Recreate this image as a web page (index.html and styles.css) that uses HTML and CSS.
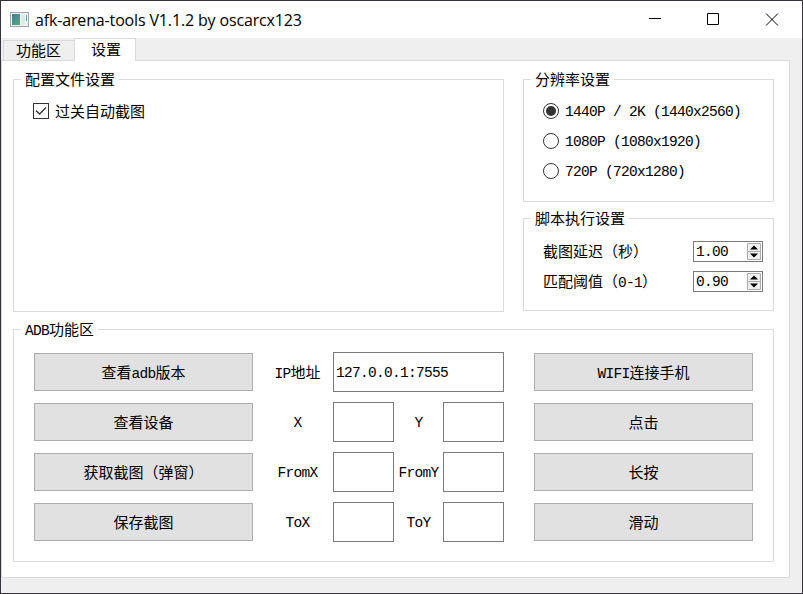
FILE: index.html
```html
<!DOCTYPE html>
<html lang="zh-CN">
<head>
<meta charset="utf-8">
<title>afk-arena-tools V1.1.2 by oscarcx123</title>
<link rel="stylesheet" href="styles.css">
</head>
<body>
<div class="window">
  <header class="titlebar">
    <svg class="app-icon" width="19" height="15" viewBox="0 0 19 15">
      <defs><linearGradient id="g" x1="0" y1="0" x2="1" y2="1"><stop offset="0" stop-color="#4c7a9c"/><stop offset="1" stop-color="#4fae72"/></linearGradient></defs>
      <rect x=".5" y=".5" width="18" height="14" fill="#f1f4f4" stroke="#a0a5aa"/>
      <rect x="2" y="2" width="8" height="11" fill="url(#g)"/>
      <rect x="11" y="2" width="4" height="11" fill="#e3e8ea"/>
      <rect x="16" y="3" width="1" height="6" fill="#67a397"/>
    </svg>
    <h1 class="title">afk-arena-tools V1.1.2 by oscarcx123</h1>
    <svg class="controls" width="130" height="14" viewBox="0 0 130 14" fill="none" stroke="#000">
      <path d="M0 5.500H12M58.500 .5H69.500V11.500H58.500Z"/>
      <path d="M117 .5L129 12.500M129 .5L117 12.500"/>
    </svg>
  </header>
  <nav class="tabs">
    <div class="tab">功能区</div>
    <div class="tab active">设置</div>
  </nav>
  <main class="pane">
    <fieldset class="group config">
      <legend>配置文件设置</legend>
      <label class="option">
        <svg width="16" height="16" viewBox="0 0 16 16" fill="none" stroke="#333"><rect x=".5" y=".5" width="15" height="15"/><path d="M3 7.500L6.500 11L13 4.500" stroke-width="1.300"/></svg>
        <span class="zh">过关自动截图</span>
      </label>
    </fieldset>
    <div class="side">
      <fieldset class="group resolution">
        <legend>分辨率设置</legend>
        <label class="option"><svg width="16" height="16" viewBox="0 0 16 16"><circle cx="8" cy="8" r="7.500" fill="#fff" stroke="#333"/><circle cx="8" cy="8" r="5" fill="#333"/></svg><span class="en">1440P / 2K (1440x2560)</span></label>
        <label class="option"><svg width="16" height="16" viewBox="0 0 16 16"><circle cx="8" cy="8" r="7.500" fill="#fff" stroke="#333"/></svg><span class="en">1080P (1080x1920)</span></label>
        <label class="option"><svg width="16" height="16" viewBox="0 0 16 16"><circle cx="8" cy="8" r="7.500" fill="#fff" stroke="#333"/></svg><span class="en">720P (720x1280)</span></label>
      </fieldset>
      <fieldset class="group script">
        <legend>脚本执行设置</legend>
        <div class="setting"><span class="zh">截图延迟（秒）</span>
          <div class="spin"><span class="en">1.00</span><svg width="14" height="17" viewBox="0 0 14 17"><path d="M.5 .5H13.500V16.500H.5ZM.5 8.500H13.500" fill="#f0f0f0" stroke="#acacac"/><path d="M3 6.500L7 2.500L11 6.500ZM3 10.500H11L7 14.500Z"/></svg></div>
        </div>
        <div class="setting"><span class="zh">匹配阈值（<span class="en">0-1</span>）</span>
          <div class="spin"><span class="en">0.90</span><svg width="14" height="17" viewBox="0 0 14 17"><path d="M.5 .5H13.500V16.500H.5ZM.5 8.500H13.500" fill="#f0f0f0" stroke="#acacac"/><path d="M3 6.500L7 2.500L11 6.500ZM3 10.500H11L7 14.500Z"/></svg></div>
        </div>
      </fieldset>
    </div>
    <fieldset class="group adb">
      <legend><span class="en">ADB</span>功能区</legend>
      <div class="adb-grid">
        <button>查看<span class="en">adb</span>版本</button>
        <span class="label wide zh"><span class="en">IP</span>地址</span>
        <div class="field long en">127.0.0.1:7555</div>
        <button class="last"><span class="en">WIFI</span>连接手机</button>

        <button>查看设备</button>
        <span class="label wide en">X</span><div class="field"></div>
        <span class="label en">Y</span><div class="field"></div>
        <button class="last">点击</button>

        <button>获取截图（弹窗）</button>
        <span class="label wide en">FromX</span><div class="field"></div>
        <span class="label en">FromY</span><div class="field"></div>
        <button class="last">长按</button>

        <button>保存截图</button>
        <span class="label wide en">ToX</span><div class="field"></div>
        <span class="label en">ToY</span><div class="field"></div>
        <button class="last">滑动</button>
      </div>
    </fieldset>
  </main>
</div>
</body>
</html>
```
FILE: styles.css
```css
* { box-sizing: border-box; }
body {
  margin: 0;
  color: #000;
  font: 400 15px/17px "Noto Sans CJK SC", sans-serif;
}
.window {
  width: 803px;
  height: 594px;
  border: 1px solid #35323c;
  background: #efefef;
  overflow: hidden;
}
.titlebar {
  display: flex;
  align-items: center;
  height: 37px;
  padding: 0 23px 0 9px;
  background: #fff;
}
.title {
  margin: 0 auto 0 6px;
  font: 400 16px/20px "Open Sans", sans-serif;
  letter-spacing: -0.15px;
  white-space: nowrap;
}
.en {
  font-family: "Liberation Mono", monospace;
  font-size: 14.5px;
  font-weight: 400;
  letter-spacing: -0.7px;
  white-space: pre;
}
/* keeps Latin runs from stretching a mixed line */
button .en, legend .en, .zh .en { line-height: 0; }
.option > .en, .spin > .en, .label.en { padding-top: 2px; }
.zh { padding-bottom: 2px; }
.tabs {
  display: flex;
  align-items: flex-end;
  height: 22px;
  padding-left: 2px;
}
.tab {
  width: 72px;
  height: 20px;
  padding-left: 12px;
  border: 1px solid #d9d9d9;
  border-bottom: 0;
  line-height: 17px;
}
.tab.active {
  position: relative;
  z-index: 1;
  width: 62px;
  height: 23px;
  margin: 0 0 -1px -1px;
  padding-left: 16px;
  background: #fff;
  line-height: 20px;
}
.pane {
  display: grid;
  grid-template-columns: 491px 251px;
  grid-template-rows: 241px 241px;
  gap: 9px 19px;
  width: 789px;
  height: 518px;
  padding: 10px 0 0 11px;
  border: 1px solid #d9d9d9;
  background: #fff;
}
.group {
  min-width: 0;
  margin: 0;
  padding: 0;
  border: 1px solid #dcdcdc;
}
legend {
  height: 17px;
  margin-left: 7px;
  padding: 0 4px;
  line-height: 15px;
}
.side {
  display: flex;
  flex-direction: column;
  gap: 8px;
}
.resolution { height: 131px; }
.script { height: 101px; }
.option {
  display: flex;
  align-items: center;
  gap: 6px;
  height: 30px;
  margin-left: 19px;
}
.config .option, .resolution legend + .option { margin-top: 8px; }
.setting {
  display: flex;
  align-items: center;
  justify-content: space-between;
  height: 30px;
  padding: 0 10px 0 19px;
}
legend + .setting { margin-top: 9px; }
.spin {
  display: flex;
  align-items: center;
  justify-content: space-between;
  width: 70px;
  height: 21px;
  padding: 0 1px 0 2px;
  border: 1px solid #7a7a7a;
}
.adb { grid-column: 1 / -1; }
.adb-grid {
  display: grid;
  grid-template-columns: 219px 80px 61px 49px 61px 249px;
  grid-auto-rows: 40px;
  row-gap: 10px;
  align-items: center;
  padding: 14px 0 0 20px;
}
button {
  height: 38px;
  padding: 0 0 2px;
  border: 1px solid #adadad;
  background: #e1e1e1;
  color: #000;
  font: inherit;
}
button.last { margin-left: 30px; }
.label { text-align: center; }
.label.wide { padding-left: 9px; }
.field {
  height: 40px;
  padding-left: 2px;
  border: 1px solid #7a7a7a;
  line-height: 41px;
}
.field.long { grid-column: span 3; }
```
